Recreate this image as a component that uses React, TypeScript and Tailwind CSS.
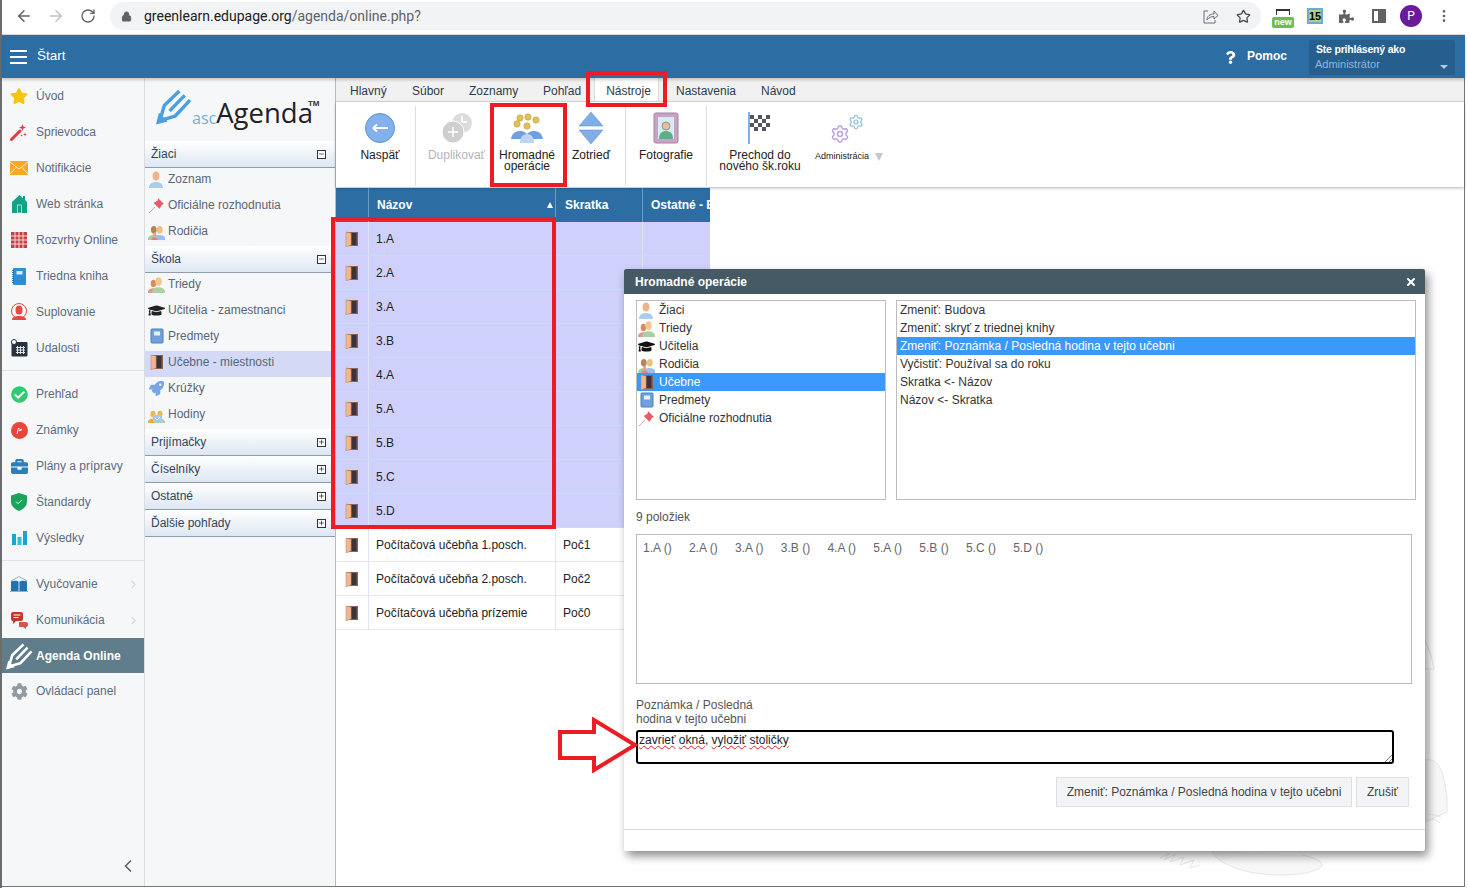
import React from "react";
import { ArrowLeft, ArrowRight, RotateCw, Lock, Star, MoreVertical, ChevronRight, ChevronLeft, X, Plus, Minus, Settings } from "lucide-react";
import { FaStar, FaCog, FaCheckCircle, FaGraduationCap, FaPuzzlePiece, FaRocket, FaBriefcase, FaQuestion } from "react-icons/fa";

const Person = ({ head = "#f0b48c", body = "#a9cdf0", x = 0, s = 1 }: { head?: string; body?: string; x?: number; s?: number }) => (
  <g transform={`translate(${x} ${(1 - s) * 17}) scale(${s})`}>
    <ellipse cx="8" cy="5" rx="3.400" ry="4.500" fill={head} />
    <path d="M1 17c0-4 3-6 7-6s7 2 7 6z" fill={body} />
  </g>
);
const PersonIcon = () => <svg width="17" height="17" viewBox="0 0 17 17"><Person /></svg>;
const TriedyIcon = () => <svg width="17" height="17" viewBox="0 0 17 17"><Person head="#d98a62" body="#ef8f8f" x={-1} s={0.8} /><Person head="#f3c88f" body="#a8d2a0" x={3} s={0.95} /></svg>;
const ParentsIcon = () => <svg width="17" height="17" viewBox="0 0 17 17"><Person head="#b98454" body="#9fcf9f" x={-1} s={0.85} /><Person head="#f0c080" body="#9cc0ee" x={5} s={0.85} /><Person head="#f0a080" body="#ef7f7f" x={3} s={0.45} /></svg>;
const DoorIcon = () => <svg width="14" height="16" viewBox="0 0 14 16"><rect x="2" y="1" width="11" height="14" fill="#8a6250" /><rect x="6.500" y="2" width="5" height="12" fill="#38343c" /><path d="M1 1l5 1v12l-5 2z" fill="#f5b58f" stroke="#b97f60" strokeWidth="0.500" /></svg>;
const PinIcon = () => <svg width="17" height="17" viewBox="0 0 17 17"><path d="M1 16l6-6" stroke="#d2a8a8" strokeWidth="1" /><path d="M10 1l6 6-2 .8-2.500 4-5.800-5.800 4-2.500z" fill="#ea5a63" /></svg>;
const BookIcon = () => <svg width="14" height="16" viewBox="0 0 14 16"><rect x="1" y="1" width="12" height="14" rx="1" fill="#6f9fdc" stroke="#4f7fbd" /><rect x="4" y="3.500" width="6" height="4" fill="#e6effa" /></svg>;
const HodinyIcon = () => <svg width="17" height="17" viewBox="0 0 17 17"><Person head="#e9b75a" body="#e9a84a" x={-1} s={0.75} /><Person head="#e9b75a" body="#a8d2a0" x={6} s={0.75} /><rect x="5" y="9" width="9" height="7" fill="#a8c8ee" /><path d="M7 12l2 2 3-3" stroke="#fff" fill="none" /></svg>;

const Wand = () => <svg width="18" height="18" viewBox="0 0 18 18"><path d="M1.500 16.500L10 8" stroke="#e23d36" strokeWidth="3" strokeLinecap="round" /><path d="M12.500 1l.9 2.600L16 4.500l-2.600.9-.9 2.600-.9-2.600L9 4.500l2.600-.9z" fill="#e23d36" /><path d="M15 9.500l.5 1.500 1.500.5-1.500.5-.5 1.500-.5-1.500-1.500-.5 1.500-.5z" fill="#e23d36" /><circle cx="11.500" cy="12.500" r="0.800" fill="#e23d36" /></svg>;
const Mail = () => <svg width="18" height="14" viewBox="0 0 18 14"><rect width="18" height="14" fill="#f9a825" /><path d="M0 1l9 7 9-7M0 13l6-6.500M18 13l-6-6.500" stroke="#fff" strokeWidth="0.800" fill="none" /></svg>;
const House = () => <svg width="17" height="18" viewBox="0 0 17 18"><path d="M1 18V7l7.500-7 3.500 3.200V1h2v4l2 2v11z" fill="#16a085" /><rect x="6.500" y="10" width="4" height="8" fill="none" stroke="#d3efe9" strokeWidth="0.700" /></svg>;
const CalRed = () => <svg width="16" height="16" viewBox="0 0 16 16"><rect width="16" height="16" fill="#c94040" /><path d="M0 4h16M0 8h16M0 12h16M4 0v16M8 0v16M12 0v16" stroke="#f3dada" strokeWidth="1" /></svg>;
const BlueBook = () => <svg width="14" height="17" viewBox="0 0 14 17"><rect x="1" width="13" height="17" rx="1" fill="#2a8fd8" /><rect x="4.500" y="3" width="6" height="3.500" fill="#d8ecfa" /><path d="M1 2v13" stroke="#0f5f9f" strokeWidth="1.500" strokeDasharray="1 1" /></svg>;
const Sub = () => <svg width="18" height="18" viewBox="0 0 18 18"><circle cx="9" cy="8" r="7.500" fill="none" stroke="#e5493c" /><ellipse cx="9" cy="7" rx="3.500" ry="4.500" fill="#e5493c" /><path d="M2 17c0-3 3-4 7-4s7 1 7 4z" fill="#e5493c" /></svg>;
const CalDark = () => <svg width="17" height="18" viewBox="0 0 17 18"><rect x="0.500" y="3" width="16" height="14.500" rx="1" fill="#27323f" /><path d="M5 8.500h9M5 11h9M5 13.500h9M6.500 7v8M9.500 7v8M12.500 7v8" stroke="#dfe4ea" strokeWidth="1" /><circle cx="3" cy="3" r="2.500" fill="#fff" stroke="#27323f" /></svg>;
const Mark = () => <svg width="17" height="17" viewBox="0 0 17 17"><circle cx="8.500" cy="8.500" r="8.500" fill="#e8463a" /><path d="M6 12l1.500-6 3 3M8 9l3-2" stroke="#fff" fill="none" /></svg>;
const Shield = () => <svg width="16" height="18" viewBox="0 0 16 18"><path d="M8 0l8 2.500V9c0 4-3.500 7-8 9-4.500-2-8-5-8-9V2.500z" fill="#19a35b" /><path d="M5 8.500l2.200 2.200L11 6.800" stroke="#fff" fill="none" /></svg>;
const Bars = () => <svg width="15" height="14" viewBox="0 0 15 14"><rect y="3" width="4" height="11" fill="#1aa5cf" /><rect x="5.500" y="6" width="4" height="8" fill="#27c3d8" /><rect x="11" width="4" height="14" fill="#1aa5cf" /></svg>;
const OpenBook = () => <svg width="18" height="16" viewBox="0 0 18 16"><path d="M1 5L9 .5 17 5" fill="none" stroke="#7fb3d8" /><path d="M1 5.500c3-1 6-1 8 .5 2-1.500 5-1.500 8-.5V15H1z" fill="#2272ad" /><path d="M9 6v9" stroke="#cfe4f3" /><path d="M0 15.500h18" stroke="#7fb3d8" /></svg>;
const Chat = () => <svg width="18" height="17" viewBox="0 0 18 17"><path d="M1 2a2 2 0 012-2h8a2 2 0 012 2v5a2 2 0 01-2 2H6l-3 3V9a2 2 0 01-2-2z" fill="#c0392b" /><path d="M3.500 3h7M3.500 5.500h5" stroke="#fff" /><path d="M9 10h7a2 2 0 012 2v1a2 2 0 01-2 2v2l-3-2H9z" fill="#d9534f" /></svg>;
const Pen = ({ color, w, h }: { color: string; w: number; h: number }) => (
  <svg width={w} height={h} viewBox="0 0 37 37" fill="none" stroke={color} strokeLinejoin="round">
    <path d="M4 33l4.500-15.500L24 2.500" strokeWidth="3.500" />
    <path d="M4 33l15.500-4.500L35 12" strokeWidth="3.500" />
    <path d="M14 23L29.500 7" strokeWidth="3.500" />
    <path d="M0 37l3-12 9 9z" fill={color} stroke="none" />
  </svg>
);

const side1: [string, React.ReactNode][] = [
  ["Úvod", <FaStar size={18} color="#f7c40f" />],
  ["Sprievodca", <Wand />],
  ["Notifikácie", <Mail />],
  ["Web stránka", <House />],
  ["Rozvrhy Online", <CalRed />],
  ["Triedna kniha", <BlueBook />],
  ["Suplovanie", <Sub />],
  ["Udalosti", <CalDark />],
];
const side2: [string, React.ReactNode][] = [
  ["Prehľad", <FaCheckCircle size={17} color="#2ecc71" />],
  ["Známky", <Mark />],
  ["Plány a prípravy", <FaBriefcase size={17} color="#2980b9" />],
  ["Štandardy", <Shield />],
  ["Výsledky", <Bars />],
];

const SideItem = ({ label, icon, chevron }: { label: string; icon: React.ReactNode; chevron?: boolean }) => (
  <div className="h-9 flex items-center text-[#5d6b80]">
    <div className="w-[34px] flex justify-center items-center shrink-0">{icon}</div>
    <span className="flex-1">{label}</span>
    {chevron && <ChevronRight size={13} className="text-[#d4d8dc] mr-[4px]" />}
  </div>
);

const SectionHead = ({ label, open }: { label: string; open?: boolean }) => (
  <div className="h-[27px] flex items-center justify-between pl-[6px] pr-[9px] bg-gradient-to-b from-white to-[#dde7f3] border-b-[1px] border-[#8d9db2] text-[#34435a]">
    <span className="-mt-[1px]">{label}</span>
    <span className="w-[9px] h-[9px] border border-[#333] bg-white flex items-center justify-center">
      {open ? <Minus size={8} strokeWidth={2} className="text-black" /> : <Plus size={8} strokeWidth={2} className="text-black" />}
    </span>
  </div>
);
const PanelItem = ({ label, icon, active }: { label: string; icon: React.ReactNode; active?: boolean }) => (
  <div className={`h-[26px] flex items-center pb-[4px] text-[#5a6577] ${active ? "bg-[#d4daf5]" : ""}`}>
    <div className="w-[23px] flex justify-center shrink-0">{icon}</div>
    <span>{label}</span>
  </div>
);

const Ribbon = ({ w, icon, children, gray }: { w: string; icon: React.ReactNode; children: React.ReactNode; gray?: boolean }) => (
  <div className={`${w} shrink-0 flex flex-col items-center pt-[10px] text-center leading-[11px] ${gray ? "text-[#b4b4b4]" : "text-[#222]"}`}>
    <div className="h-[32px] flex items-center justify-center">{icon}</div>
    <div className="mt-[6px]">{children}</div>
  </div>
);
const Sep = () => <div className="w-px h-[80px] bg-[#dedede] mt-[4px] shrink-0" />;

const rowsSel = ["1.A", "2.A", "3.A", "3.B", "4.A", "5.A", "5.B", "5.C", "5.D"];
const rowsOther = [["Počítačová učebňa 1.posch.", "Poč1"], ["Počítačová učebňa 2.posch.", "Poč2"], ["Počítačová učebňa prízemie", "Poč0"]];

const Row = ({ name, short, sel }: { name: string; short?: string; sel?: boolean }) => (
  <div className={`flex h-[34px] w-[374px] items-center border-b ${sel ? "bg-[#d0d0fc] border-[#c6dcf8]" : "bg-white border-[#e4e8ee]"}`}>
    <div className="w-[33px] h-full flex items-center justify-center border-r border-[#dce6f2]"><DoorIcon /></div>
    <div className="w-[187px] h-full flex items-center pl-[7px] border-r border-[#dce6f2] text-[#222]">{name}</div>
    <div className="w-[87px] h-full flex items-center pl-[7px] border-r border-[#dce6f2] text-[#222]">{short}</div>
    <div className="flex-1 h-full" />
  </div>
);

const ListRow = ({ label, icon, sel }: { label: string; icon?: React.ReactNode; sel?: boolean }) => (
  <div className={`h-[18px] flex items-center ${sel ? "bg-[#3b99fc] text-white" : "text-[#333]"}`}>
    {icon && <div className="w-[22px] pr-[3px] flex justify-center shrink-0">{icon}</div>}
    <span className={icon ? "" : "pl-[3px]"}>{label}</span>
  </div>
);

export default function App() {
  return (
    <div className="relative w-[1468px] h-[888px] overflow-hidden bg-white text-[12px] font-['Liberation_Sans',Arial,sans-serif]">
      <div className="w-[1465px] h-[888px] flex flex-col border-l-2 border-[#6d6d6d]">
        {/* browser chrome */}
        <div className="h-[35px] shrink-0 flex items-center bg-white border-b border-[#d8d8d8] pb-[2px] font-['Roboto',sans-serif]">
          <ArrowLeft size={18} className="ml-[13px] text-[#5f6368]" />
          <ArrowRight size={18} className="ml-[14px] text-[#bdc1c6]" />
          <RotateCw size={16} className="ml-[15px] text-[#5f6368]" />
          <div className="ml-[14px] w-[1151px] h-[28px] rounded-full bg-[#f1f3f4] flex items-center pl-[11px] pr-[10px]">
            <Lock size={11} className="text-[#5f6368]" fill="#5f6368" />
            <span className="ml-[12px] text-[14px] text-[#202124]">greenlearn.edupage.org<span className="text-[#5f6368]">/agenda/online.php?</span></span>
            <div className="ml-auto flex items-center gap-[17px] text-[#5f6368]">
              <svg width="16" height="15" viewBox="0 0 16 15" fill="none" stroke="#6b6f74" strokeWidth="1"><path d="M5 2H1v12h11v-3" /><path d="M4 11c0-4 3-6 7-6V2l4 4.500L11 10V7.500C8 7.500 6 8.500 4 11z" /></svg>
              <Star size={15} strokeWidth={2} className="text-[#44474a]" />
            </div>
          </div>
          <div className="ml-[11px] w-[22px] h-[24px] flex flex-col items-center justify-end">
            <div className="w-[14px] h-[6px] border-t-2 border-x border-[#333] mb-[2px]" />
            <div className="w-[22px] h-[11px] bg-[#6cc04a] rounded-[2px] text-white text-[9px] leading-[11px] font-bold text-center font-['Liberation_Sans',sans-serif]">new</div>
          </div>
          <div className="ml-[13px] w-[16px] h-[16px] bg-[#a9d18e] border-2 border-[#6fa8dc] text-black text-[11px] leading-[12px] font-bold text-center font-['Liberation_Sans',sans-serif]">15</div>
          <FaPuzzlePiece size={15} className="ml-[16px] text-[#5f6368]" />
          <div className="ml-[18px] w-[14px] h-[14px] border-2 border-[#5f6368] flex justify-end"><div className="w-[6px] h-full bg-[#5f6368]" /></div>
          <div className="ml-[14px] w-[22px] h-[22px] rounded-full bg-[#6a1b9a] text-white text-[12px] flex items-center justify-center">P</div>
          <MoreVertical size={16} className="ml-[14px] text-[#5f6368]" />
        </div>

        {/* header */}
        <div className="h-[43px] shrink-0 bg-[#2c6ea3] flex items-center text-white relative z-10 shadow-[0_2px_3px_rgba(0,0,0,0.2)]">
          <div className="ml-[8px] w-[17px] flex flex-col gap-[4px]"><div className="h-[2px] bg-white" /><div className="h-[2px] bg-white" /><div className="h-[2px] bg-white" /></div>
          <span className="ml-[10px] text-[13.500px] -mt-[1px]">Štart</span>
          <div className="ml-auto flex items-center">
            <FaQuestion size={13} className="mr-[10px] mt-[2px]" />
            <span className="font-bold mr-[22px] -mt-[1px]">Pomoc</span>
            <div className="w-[146px] h-[35px] bg-[#265f8e] rounded-[2px] px-[6px] pt-[2px] mr-[10px] relative mt-[1px]">
              <div className="text-[10.500px] font-bold leading-[15px] tracking-[-0.2px] pl-[1px]">Ste prihlásený ako</div>
              <div className="text-[11px] leading-[14px] text-[#8fb4dc]">Administrátor</div>
              <div className="absolute right-[7px] bottom-[6px] border-x-[4px] border-x-transparent border-t-[4px] border-t-[#b8c8d8]" />
            </div>
          </div>
        </div>

        {/* main */}
        <div className="flex-1 flex min-h-0 border-b-[1px] border-r-[1px] border-[#777] mb-[1px]">
          {/* sidebar */}
          <div className="w-[143px] shrink-0 bg-[#f6f7f9] border-r border-[#d9dce0] flex flex-col relative">
            {side1.map(([l, i]) => <SideItem key={l} label={l} icon={i} />)}
            <div className="h-px bg-[#dfe1e4] mt-[4px] mb-[5px]" />
            {side2.map(([l, i]) => <SideItem key={l} label={l} icon={i} />)}
            <div className="h-px bg-[#dfe1e4] mt-[4px] mb-[5px]" />
            <SideItem label="Vyučovanie" icon={<OpenBook />} chevron />
            <SideItem label="Komunikácia" icon={<Chat />} chevron />
            <div className="h-[35px] bg-[#607d8b] flex items-center text-white font-bold">
              <div className="w-[34px] pl-[4px] shrink-0"><Pen color="#ffffff" w={27} h={28} /></div>
              <span>Agenda Online</span>
            </div>
            <SideItem label="Ovládací panel" icon={<FaCog size={17} color="#8f9ba3" />} />
            <ChevronLeft size={20} className="absolute left-[116px] bottom-[10px] text-[#59636e]" />
          </div>

          {/* panel */}
          <div className="w-[191px] shrink-0 bg-[#f6f7f9] border-r border-[#b7bcc2]">
            <div className="h-[63px] flex items-start pl-[11px] pt-[10px]">
              <Pen color="#4a9fe0" w={36} h={37} />
              <span className="text-[#6cb0e2] text-[16px] leading-[20px] mt-[20px] font-['Open_Sans',sans-serif]">asc</span>
              <span className="text-[#222] text-[27.500px] leading-[36px] font-medium font-['Open_Sans',sans-serif] mt-[7px]">Agenda</span>
              <span className="text-[#333] text-[8px] font-bold mt-[12px] -ml-[5px] leading-[7px]">TM</span>
            </div>
            <SectionHead label="Žiaci" open />
            <PanelItem label="Zoznam" icon={<PersonIcon />} />
            <PanelItem label="Oficiálne rozhodnutia" icon={<PinIcon />} />
            <PanelItem label="Rodičia" icon={<ParentsIcon />} />
            <SectionHead label="Škola" open />
            <PanelItem label="Triedy" icon={<TriedyIcon />} />
            <PanelItem label="Učitelia - zamestnanci" icon={<FaGraduationCap size={17} color="#222" />} />
            <PanelItem label="Predmety" icon={<BookIcon />} />
            <PanelItem label="Učebne - miestnosti" icon={<DoorIcon />} active />
            <PanelItem label="Krúžky" icon={<FaRocket size={15} color="#7aa6e8" />} />
            <PanelItem label="Hodiny" icon={<HodinyIcon />} />
            <SectionHead label="Prijímačky" />
            <SectionHead label="Číselníky" />
            <SectionHead label="Ostatné" />
            <SectionHead label="Ďalšie pohľady" />
          </div>

          {/* content */}
          <div className="flex-1 min-w-0 flex flex-col relative">
            <svg className="absolute right-0 bottom-0" width="338" height="258" viewBox="1126 628 338 258" fill="none" stroke="#e6e6e6" strokeWidth="1">
              <path d="M1425 640l6 15 3 14h-9M1429 670v123" />
              <path d="M1425 760c11-2 19 5 22 40v12l-22 10z" fill="#f7f7f7" />
              <path d="M1428 815c6-1 10 0 14 3M1428 820c6-1 10 0 12 3" />
              <path d="M1212 851c5 12 30 24 70 24 25 0 40-6 40-10 0-5-10-8-20-10" fill="#f7f7f7" />
              <path d="M1160 858l10-5-6 7 12-6-6 8 14-5-4 8 14-5-4 8 10-3" />
            </svg>
            <div className="h-[24px] shrink-0 bg-[#f1f1f1] flex items-end text-[#2f3b4c] pl-[14px] border-b border-[#dcdcdc] relative">
              <span className="w-[62px] h-[19px]">Hlavný</span>
              <span className="w-[57px] h-[19px]">Súbor</span>
              <span className="w-[74px] h-[19px]">Zoznamy</span>
              <span className="w-[51px] h-[19px]">Pohľad</span>
              <span className="w-[65px] h-[24px] bg-white border border-b-0 border-[#dcdcdc] flex justify-center pt-[4px] pl-[4px]">Nástroje</span>
              <span className="w-[85px] h-[19px] ml-[17px]">Nastavenia</span>
              <span className="h-[19px]">Návod</span>
            </div>
            <div className="h-[85px] shrink-0 bg-white flex shadow-[0_1px_3px_rgba(0,0,0,0.3)] relative pl-[9px]">
              <Ribbon w="w-[70px]" icon={<svg width="30" height="30" viewBox="0 0 30 30"><circle cx="15" cy="15" r="14.500" fill="#82b1ee" stroke="#5a8fd4" /><path d="M23 15H8m0 0l4-3.500M8 15l4 3.500" stroke="#fff" strokeWidth="1.800" fill="none" /></svg>}>Naspäť</Ribbon>
              <Sep />
              <Ribbon w="w-[81px]" gray icon={<svg width="32" height="32" viewBox="0 0 32 32"><circle cx="21" cy="11" r="10" fill="#dcdcdc" /><circle cx="12" cy="20" r="11" fill="#cfcfcf" stroke="#fff" /><path d="M12 15v10M7 20h10M21 4v6h5" stroke="#fff" strokeWidth="1.500" fill="none" /></svg>}>Duplikovať</Ribbon>
              <Ribbon w="w-[60px]" icon={<svg width="32" height="30" viewBox="0 0 32 30">{[[9, 5], [17, 4], [25, 7], [6, 11], [16, 13]].map(([x, y]) => <circle key={x} cx={x} cy={y} r="3.200" fill="#e3c159" stroke="#b59a3d" strokeWidth="0.500" />)}<path d="M0 26c1-6 5-8 9-8s8 2 9 8zM14 26c1-6 5-8 9-8s8 2 9 8z" fill="#6f9fdc" /><path d="M9 30c0-6 3-9 7-9s7 3 7 9z" fill="#bcd6f2" /></svg>}>Hromadné<br />operácie</Ribbon>
              <Ribbon w="w-[68px]" icon={<svg width="26" height="32" viewBox="0 0 26 32"><path d="M13 0l12 14H1z" fill="#7faee8" stroke="#5a8fd4" strokeWidth="0.500" /><path d="M13 32L1 18h24z" fill="#7faee8" stroke="#5a8fd4" strokeWidth="0.500" /></svg>}>Zotrieď</Ribbon>
              <Sep />
              <Ribbon w="w-[80px]" icon={<svg width="26" height="32" viewBox="0 0 26 32"><rect x="1" y="1" width="24" height="30" rx="2" fill="#c9a3c4" stroke="#a87fa3" /><rect x="5" y="5" width="16" height="22" fill="#d6ecf7" /><circle cx="13" cy="14" r="4" fill="#e5c09c" stroke="#555" strokeWidth="0.500" /><path d="M6 27c0-6 3-8 7-8s7 2 7 8z" fill="#5fae8a" /></svg>}>Fotografie</Ribbon>
              <Sep />
              <Ribbon w="w-[106px]" icon={<svg width="26" height="32" viewBox="0 0 26 32"><rect x="1" y="0" width="2" height="32" fill="#7faee8" /><rect x="3" y="3" width="22" height="16" fill="#fff" /><path d="M3 3h4v4H3zM11 3h4v4h-4zM19 3h4v4h-4zM7 7h4v4H7zM15 7h4v4h-4zM3 11h4v4H3zM11 11h4v4h-4zM19 11h4v4h-4zM7 15h4v4H7zM15 15h4v4h-4z" fill="#556" /></svg>}>Prechod do<br />nového šk.roku</Ribbon>
              <div className="w-[72px] shrink-0 flex flex-col items-center pt-[10px] text-[#222]">
                <div className="h-[32px] flex items-end pr-[4px]">
                  <Settings size={20} strokeWidth={1.8} className="text-[#b9a4dc]" />
                  <Settings size={16} strokeWidth={1.8} className="text-[#8cc0d8] -ml-[2px] mb-[14px]" />
                </div>
                <div className="mt-[7px] flex items-center text-[9px] leading-[11px]">Administrácia<span className="ml-[6px] border-x-[4px] border-x-transparent border-t-[8px] border-t-[#c4c8cc]" /></div>
              </div>
            </div>
            {/* table */}
            <div className="w-[374px] mt-[1px] h-[34px] shrink-0 bg-[#2c6ea3] flex text-white font-bold">
              <div className="w-[33px] border-r border-[#6f9cc2]" />
              <div className="w-[187px] border-r border-[#6f9cc2] flex items-center justify-between pl-[8px] pr-[2px]"><span>Názov</span><span className="border-x-[3.500px] border-x-transparent border-b-[6px] border-b-white" /></div>
              <div className="w-[87px] border-r border-[#6f9cc2] flex items-center pl-[9px]">Skratka</div>
              <div className="flex-1 flex items-center pl-[8px] overflow-hidden whitespace-nowrap">Ostatné - Budova</div>
            </div>
            {rowsSel.map((r) => <Row key={r} name={r} sel />)}
            {rowsOther.map(([a, b]) => <Row key={a} name={a} short={b} />)}
          </div>
        </div>
      </div>

      {/* modal */}
      <div className="absolute left-[624px] top-[269px] w-[801px] h-[582px] bg-white rounded-[2px] shadow-[3px_5px_10px_rgba(0,0,0,0.45)] flex flex-col z-20">
        <div className="h-[25px] bg-[#455a64] text-white font-bold flex items-center justify-between pl-[11px] pr-[8px] shrink-0 rounded-t-[2px]">
          <span>Hromadné operácie</span>
          <X size={12} strokeWidth={4} />
        </div>
        <div className="flex gap-[10px] mt-[6px] ml-[12px]">
          <div className="w-[250px] h-[200px] border border-[#bdbdbd]">
            <ListRow label="Žiaci" icon={<PersonIcon />} />
            <ListRow label="Triedy" icon={<TriedyIcon />} />
            <ListRow label="Učitelia" icon={<FaGraduationCap size={17} color="#111" />} />
            <ListRow label="Rodičia" icon={<ParentsIcon />} />
            <ListRow label="Učebne" icon={<DoorIcon />} sel />
            <ListRow label="Predmety" icon={<BookIcon />} />
            <ListRow label="Oficiálne rozhodnutia" icon={<PinIcon />} />
          </div>
          <div className="w-[520px] h-[200px] border border-[#bdbdbd]">
            <ListRow label="Zmeniť: Budova" />
            <ListRow label="Zmeniť: skryť z triednej knihy" />
            <ListRow label="Zmeniť: Poznámka / Posledná hodina v tejto učebni" sel />
            <ListRow label="Vyčistiť: Používal sa do roku" />
            <ListRow label="Skratka <- Názov" />
            <ListRow label="Názov <- Skratka" />
          </div>
        </div>
        <div className="ml-[12px] mt-[10px] h-[14px] leading-[14px] text-[#555]">9 položiek</div>
        <div className="ml-[12px] mt-[10px] w-[776px] h-[150px] border border-[#bdbdbd] px-[6px] py-[6px] flex gap-[17.250px] text-[#666] leading-[14px] items-start">
          {rowsSel.map((r) => <span key={r}>{r} ()</span>)}
        </div>
        <div className="ml-[12px] mt-[14px] w-[130px] leading-[14px] text-[#555]">Poznámka / Posledná hodina v tejto učebni</div>
        <div className="relative ml-[12px] mt-[4px] w-[758px] h-[34px] border-2 border-black rounded-[3px] px-[1px] pt-[1px] leading-[15px] text-[#222]">
          <span className="underline decoration-wavy decoration-[#e02020] decoration-1">zavrieť</span>{" "}
          <span className="underline decoration-wavy decoration-[#e02020] decoration-1">okná</span>,{" "}
          <span className="underline decoration-wavy decoration-[#e02020] decoration-1">vyložiť</span>{" "}
          <span className="underline decoration-wavy decoration-[#e02020] decoration-1">stoličky</span>
          <svg className="absolute right-0 bottom-0" width="8" height="8" viewBox="0 0 8 8" stroke="#777"><path d="M1 8l7-7M5 8l3-3" /></svg>
        </div>
        <div className="flex justify-end gap-[4px] mr-[16px] mt-[13px]">
          <div className="h-[30px] w-[296px] bg-[#f3f4f8] border border-[#e0e0e0] flex items-center justify-center text-[#444]">Zmeniť: Poznámka / Posledná hodina v tejto učebni</div>
          <div className="h-[30px] w-[53px] bg-[#f3f4f8] border border-[#e0e0e0] flex items-center justify-center text-[#444]">Zrušiť</div>
        </div>
        <div className="mt-[22px] h-px bg-[#dcdcdc]" />
      </div>

      {/* red annotations */}
      <div className="absolute left-[586px] top-[71px] w-[81px] h-[36px] border-4 border-[#ed1c24] z-30" />
      <div className="absolute left-[490px] top-[103px] w-[77px] h-[84px] border-4 border-[#ed1c24] z-30" />
      <div className="absolute left-[331px] top-[217px] w-[225px] h-[312px] border-4 border-[#ed1c24] z-30" />
      <svg className="absolute left-[557px] top-[717px] z-30" width="82" height="56" viewBox="0 0 82 56"><path d="M3 15h34V3l41 25-41 25V41H3z" fill="#fff" stroke="#ed1c24" strokeWidth="4" /></svg>
    </div>
  );
}
